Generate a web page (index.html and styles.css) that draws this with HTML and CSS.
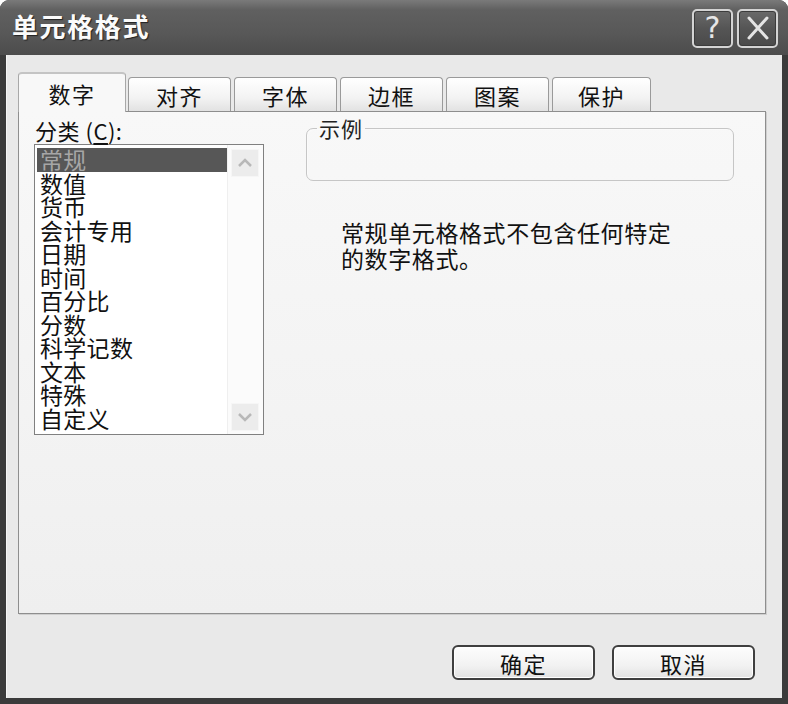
FILE: index.html
```html
<!DOCTYPE html>
<html lang="zh-CN">
<head>
<meta charset="utf-8">
<title>单元格格式</title>
<link rel="stylesheet" href="styles.css">
</head>
<body>
<div class="window">
  <div class="titlebar">
    <div class="title">单元格格式</div>
    <div class="title-buttons">
      <div class="tbtn tbtn-help">?</div>
      <div class="tbtn tbtn-close">
        <svg width="26" height="26" viewBox="0 0 26 26"><path d="M4 3 L22 23 M22 3 L4 23" stroke="#e4e4e4" stroke-width="3" fill="none" stroke-linecap="round"/></svg>
      </div>
    </div>
  </div>
  <div class="client">
    <div class="tabs">
      <div class="tab tab-active">数字</div>
      <div class="tab">对齐</div>
      <div class="tab">字体</div>
      <div class="tab">边框</div>
      <div class="tab">图案</div>
      <div class="tab tab-last">保护</div>
    </div>
    <div class="panel">
      <div class="panel-body">
        <div class="left-col">
          <div class="label">分类 (<u>C</u>):</div>
          <div class="listbox">
            <ul class="items">
              <li class="item item-selected">常规</li>
              <li class="item">数值</li>
              <li class="item">货币</li>
              <li class="item">会计专用</li>
              <li class="item">日期</li>
              <li class="item">时间</li>
              <li class="item">百分比</li>
              <li class="item">分数</li>
              <li class="item">科学记数</li>
              <li class="item">文本</li>
              <li class="item">特殊</li>
              <li class="item">自定义</li>
            </ul>
            <div class="scrollbar">
              <div class="sbtn">
                <svg width="16" height="10" viewBox="0 0 16 10"><path d="M2 8 L8 2 L14 8" stroke="#b8b8b8" stroke-width="2.5" fill="none"/></svg>
              </div>
              <div class="sbtn">
                <svg width="16" height="10" viewBox="0 0 16 10"><path d="M2 2 L8 8 L14 2" stroke="#b8b8b8" stroke-width="2.5" fill="none"/></svg>
              </div>
            </div>
          </div>
        </div>
        <div class="right-col">
          <fieldset class="sample">
            <legend class="sample-legend">示例</legend>
            <div class="sample-body"></div>
          </fieldset>
          <p class="desc">常规单元格格式不包含任何特定的数字格式。</p>
        </div>
      </div>
    </div>
    <div class="actions">
      <div class="btn">确定</div>
      <div class="btn">取消</div>
    </div>
  </div>
</div>
</body>
</html>
```
FILE: styles.css
```css
* { box-sizing: border-box; }
html, body {
  margin: 0;
  padding: 0;
  background: #ffffff;
}
body {
  font-family: "Noto Sans CJK SC", "Noto Sans", sans-serif;
  color: #111;
}
.window {
  width: 788px;
  height: 704px;
  background: #3b3b3b;
  border-radius: 9px 9px 0 0;
  display: flex;
  flex-direction: column;
  overflow: hidden;
}
.titlebar {
  height: 55px;
  flex: none;
  display: flex;
  align-items: center;
  justify-content: space-between;
  padding: 0 10px 0 12px;
  background: linear-gradient(#7a7a7a, #606060 18%, #585858 60%, #4c4c4c);
}
.title {
  color: #fbfbfb;
  font-size: 26px;
  font-weight: 700;
  letter-spacing: 1.6px;
  line-height: 30px;
  text-shadow: 1px 1px 1px #222;
  margin-top: -3px;
}
.title-buttons {
  display: flex;
  gap: 4px;
  margin-top: 1px;
}
.tbtn {
  width: 41px;
  height: 39px;
  border: 2px solid #d4d4d4;
  border-radius: 5px;
  background: linear-gradient(#6a6a6a, #555 50%, #4a4a4a);
  box-shadow: inset 0 0 0 1px #3c3c3c;
  display: flex;
  align-items: center;
  justify-content: center;
  color: #e6e6e6;
}
.tbtn-help {
  font-family: "DejaVu Sans", sans-serif;
  font-size: 30px;
  line-height: 1;
}
.client {
  flex: 1;
  margin: 0 6px 6px 6px;
  background: #e9e9e9;
  border-left: 1px solid #f6f6f6;
  display: flex;
  flex-direction: column;
  padding: 17px 16px 0 11px;
}
.tabs {
  display: flex;
  align-items: flex-end;
  height: 39px;
  gap: 3px;
}
.tab {
  width: 103px;
  height: 34px;
  border: 1px solid #9a9a9a;
  border-bottom: none;
  border-radius: 4px 4px 0 0;
  background: linear-gradient(#ffffff, #f3f3f3 60%, #e2e2e2);
  display: flex;
  align-items: center;
  justify-content: center;
  font-size: 22px;
  letter-spacing: 1.5px;
  padding-top: 1px;
}
.tab-last { width: 99px; }
.tab-active {
  width: 108px;
  height: 40px;
  margin-right: -1px;
  margin-bottom: -1px;
  background: #f8f8f8;
  border-color: #a8a8a8;
  border-top: 2px solid #c4c4c4;
  position: relative;
  z-index: 1;
  padding-top: 0;
}
.panel {
  height: 503px;
  border: 1px solid #8e8e8e;
  background: linear-gradient(#f8f8f8, #f3f3f3 60%, #efefef);
  box-shadow: 1px 1px 0 #cfcfcf;
}
.panel-body {
  display: grid;
  grid-template-columns: 230px 428px;
  column-gap: 42px;
  padding: 4px 0 0 15px;
}
.label {
  font-size: 22px;
  line-height: 28px;
  height: 28px;
  letter-spacing: 0.5px;
  padding-left: 1px;
}
.label u { text-underline-offset: 3px; }
.listbox {
  width: 230px;
  height: 291px;
  border: 1px solid #808080;
  background: #ffffff;
  display: flex;
}
.items {
  list-style: none;
  margin: 0;
  padding: 3px 0 0 2px;
  width: 192px;
}
.item {
  height: 23.5px;
  line-height: 23.5px;
  font-size: 23px;
  letter-spacing: 0.3px;
  padding-left: 3px;
  white-space: nowrap;
}
.item-selected {
  background: #575757;
  color: #a6a6a6;
}
.scrollbar {
  flex: 1;
  border-left: 1px solid #efefef;
  background: #fbfbfb;
  display: flex;
  flex-direction: column;
  justify-content: space-between;
  padding: 4px 4px 3px 3px;
}
.sbtn {
  height: 28px;
  background: #ececec;
  border: 1px solid #f6f6f6;
  display: flex;
  align-items: center;
  justify-content: center;
}
.sample {
  margin: 0;
  padding: 0 0 0 10px;
  width: 428px;
  border: 1px solid #c6c6c6;
  border-radius: 7px;
  box-shadow: inset 1px 1px 0 #fafafa;
}
.sample-legend {
  padding: 0 2px;
  font-size: 21px;
  line-height: 24px;
  letter-spacing: 1px;
  color: #222;
}
.sample-body { height: 40px; }
.desc {
  margin: 38px 0 0 35px;
  width: 345px;
  font-size: 23px;
  line-height: 26px;
  letter-spacing: 0.6px;
  color: #111;
}
.actions {
  display: flex;
  justify-content: flex-end;
  gap: 17px;
  margin-top: 31px;
  padding-right: 11px;
}
.btn {
  width: 143px;
  height: 35px;
  border: 2px solid #3f3f3f;
  border-radius: 6px;
  background: linear-gradient(#fdfdfd, #f2f2f2 60%, #e2e2e2);
  box-shadow: inset 0 0 0 1px #ffffff;
  display: flex;
  align-items: center;
  justify-content: center;
  font-size: 22px;
  letter-spacing: 1.5px;
}
```
